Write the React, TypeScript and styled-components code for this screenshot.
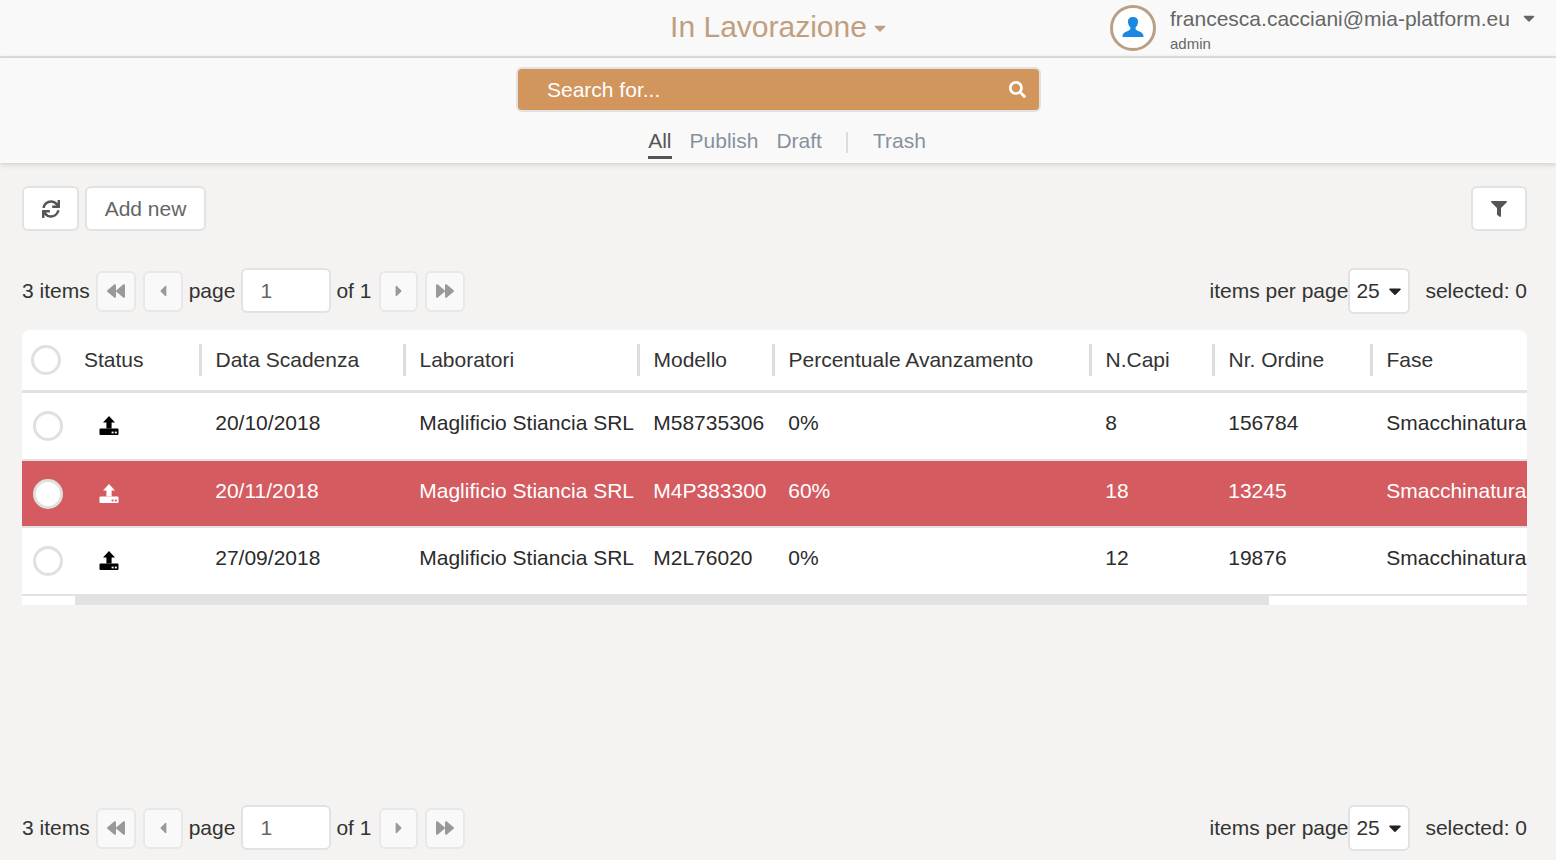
import React from "react";
import styled, { createGlobalStyle } from "styled-components";
import { FaBackward, FaCaretDown, FaCaretLeft, FaCaretRight, FaFilter, FaForward, FaSearch, FaSync } from "react-icons/fa";

const GlobalStyle = createGlobalStyle`
  * { box-sizing: border-box; }
  html, body { margin: 0; padding: 0; height: 100%; }
  body {
    background: #f4f3f1;
    font-family: "Liberation Sans", Arial, sans-serif;
    color: #212121;
    overflow: hidden;
  }
`;

// widths of the table columns, the first one holds the checkbox and the status
const COLUMNS = "177px 204px 234px 135px 317px 123px 158px 157px";

const headers = ["Data Scadenza", "Laboratori", "Modello", "Percentuale Avanzamento", "N.Capi", "Nr. Ordine", "Fase"];

const rows = [
  { date: "20/10/2018", lab: "Maglificio Stiancia SRL", model: "M58735306", perc: "0%", capi: "8", order: "156784", phase: "Smacchinatura", late: false },
  { date: "20/11/2018", lab: "Maglificio Stiancia SRL", model: "M4P383300", perc: "60%", capi: "18", order: "13245", phase: "Smacchinatura", late: true },
  { date: "27/09/2018", lab: "Maglificio Stiancia SRL", model: "M2L76020", perc: "0%", capi: "12", order: "19876", phase: "Smacchinatura", late: false },
];

const UploadIcon = ({ dots }: { dots: string }) => (
  <svg width="20" height="20" viewBox="0 0 20 20" fill="currentColor">
    <path d="M10 0 L16 6.6 H12.6 V12.5 H7.4 V6.6 H4 Z" />
    <rect x="0.5" y="12.5" width="19" height="6.5" rx="1" />
    <rect x="12.6" y="15.6" width="2" height="1.8" fill={dots} />
    <rect x="15.8" y="15.6" width="2" height="1.8" fill={dots} />
  </svg>
);

const Pager = () => (
  <PagerRow>
    <PagerSide>
      <PagerText>3 items</PagerText>
      <PageButton $width={40}><FaBackward size={18} /></PageButton>
      <PageButton $width={40}><FaCaretLeft size={18} /></PageButton>
      <PagerText>page</PagerText>
      <PageInput>1</PageInput>
      <OfText>of 1</OfText>
      <PageButton $width={38.5}><FaCaretRight size={18} /></PageButton>
      <PageButton $width={40}><FaForward size={18} /></PageButton>
    </PagerSide>
    <PagerSide>
      <PagerText>items per page</PagerText>
      <PerPage>25 <FaCaretDown size={20} /></PerPage>
      <Selected>selected: 0</Selected>
    </PagerSide>
  </PagerRow>
);

const App: React.FC = () => {
  return (
    <Page>
      <GlobalStyle />
      <TopBar>
        <Title>
          In Lavorazione
          <FaCaretDown size={18} />
        </Title>
        <User>
          <Avatar>
            <svg width="24" height="24" viewBox="0 0 24 24" fill="#1a88e0">
              <path d="M12 2 C8 2 6.6 4.6 7 7.6 C7.3 9.8 8.2 11.4 9.4 12.6 C9.7 14.2 9.2 15 7.4 15.8 C5 16.9 2.4 17.6 1.6 20 V22 H22.4 V20 C21.6 17.6 19 16.9 16.6 15.8 C14.8 15 14.3 14.2 14.6 12.6 C15.8 11.4 16.7 9.8 17 7.6 C17.4 4.6 16 2 12 2 Z" />
            </svg>
          </Avatar>
          <UserText>
            <Email>francesca.cacciani@mia-platform.eu</Email>
            <Role>admin</Role>
          </UserText>
          <UserCaret><FaCaretDown size={18} /></UserCaret>
        </User>
      </TopBar>

      <SearchPanel>
        <SearchBox>
          <span>Search for...</span>
          <FaSearch size={17} />
        </SearchBox>
        <Tabs>
          <Tab $active>All</Tab>
          <Tab>Publish</Tab>
          <Tab>Draft</Tab>
          <TabDivider />
          <Tab>Trash</Tab>
        </Tabs>
      </SearchPanel>

      <Content>
        <Toolbar>
          <ToolGroup>
            <ToolButton $width={57}><FaSync size={18} /></ToolButton>
            <ToolButton $width={121}>Add new</ToolButton>
          </ToolGroup>
          <ToolButton $width={56}><FaFilter size={16} /></ToolButton>
        </Toolbar>

        <Pager />

        <Table>
          <HeaderRow>
            <StatusHead>
              <HeadCheck />
              Status
            </StatusHead>
            {headers.map((h) => (
              <HeadCell key={h}>{h}</HeadCell>
            ))}
          </HeaderRow>
          {rows.map((r) => (
            <Row key={r.model} $late={r.late}>
              <StatusCell>
                <RowCheck />
                <IconWrap $late={r.late}><UploadIcon dots={r.late ? "#d45c60" : "#fff"} /></IconWrap>
              </StatusCell>
              <Cell>{r.date}</Cell>
              <Cell>{r.lab}</Cell>
              <Cell>{r.model}</Cell>
              <Cell>{r.perc}</Cell>
              <Cell>{r.capi}</Cell>
              <Cell>{r.order}</Cell>
              <Cell>{r.phase}</Cell>
            </Row>
          ))}
          <ScrollTrack>
            <ScrollThumb />
          </ScrollTrack>
        </Table>

        <BottomPager>
          <Pager />
        </BottomPager>
      </Content>
    </Page>
  );
};

const Page = styled.div`
  height: 860px;
  display: flex;
  flex-direction: column;
`;
const TopBar = styled.header`
  height: 58px;
  flex: none;
  background: #f9f9f9;
  border-bottom: 2px solid #e2e2e2;
  display: flex;
  justify-content: center;
  position: relative;
`;
const Title = styled.div`
  margin: 8px 0 0 3px;
  display: flex;
  align-items: center;
  gap: 4px;
  height: 37px;
  font-size: 30px;
  color: #c09f7f;
  svg {
    margin-top: 2px;
  }
`;
const User = styled.div`
  position: absolute;
  top: 5px;
  left: 1110px;
  display: flex;
`;
const Avatar = styled.div`
  width: 46px;
  height: 46px;
  border: 3px solid #bb9f85;
  border-radius: 50%;
  background: #fff;
  display: flex;
  align-items: center;
  justify-content: center;
  svg {
    margin-bottom: 2px;
  }
`;
const UserText = styled.div`
  margin-left: 14px;
`;
const Email = styled.div`
  font-size: 21px;
  line-height: 28px;
  color: #666;
`;
const Role = styled.div`
  font-size: 15px;
  line-height: 20px;
  margin-top: 1px;
  color: #666;
`;
const UserCaret = styled.div`
  margin: 4px 0 0 10px;
  color: #666;
`;
const SearchPanel = styled.section`
  height: 105px;
  flex: none;
  background: #f9f9f9;
  box-shadow: 0 1px 6px rgba(0, 0, 0, 0.18);
  display: flex;
  flex-direction: column;
  align-items: center;
  position: relative;
  padding-top: 9px;
`;
const SearchBox = styled.div`
  width: 525px;
  height: 45px;
  background: #d2955b;
  border: 2px solid #e2e2e2;
  border-radius: 6px;
  color: #fff;
  font-size: 21px;
  padding: 0 13px 0 29.5px;
  display: flex;
  align-items: center;
  justify-content: space-between;
`;
const Tabs = styled.nav`
  display: flex;
  align-items: flex-start;
  margin-top: 16px;
  margin-left: 36px;
`;
const Tab = styled.div<{ $active?: boolean }>`
  font-size: 21px;
  height: 31px;
  line-height: 26px;
  margin-right: 18px;
  color: ${(p) => (p.$active ? "#555" : "#87919e")};
  border-bottom: ${(p) => (p.$active ? "3px solid #555" : "none")};
`;
const TabDivider = styled.div`
  width: 2px;
  height: 21px;
  margin: 4px 25px 0 6px;
  background: #ddd;
`;
const Content = styled.main`
  flex: 1;
  padding: 23px 29px 9px 22px;
  display: flex;
  flex-direction: column;
  min-height: 0;
`;
const Toolbar = styled.div`
  display: flex;
  justify-content: space-between;
  margin-bottom: 37px;
`;
const ToolGroup = styled.div`
  display: flex;
  gap: 6px;
`;
const ToolButton = styled.div<{ $width: number }>`
  width: ${(p) => p.$width}px;
  height: 45px;
  background: #fff;
  border: 2px solid #e2e2e2;
  border-radius: 6px;
  color: #666;
  font-size: 21px;
  display: flex;
  align-items: center;
  justify-content: center;
  svg {
    color: #555;
  }
`;
const PagerRow = styled.div`
  display: flex;
  justify-content: space-between;
  align-items: center;
  height: 46px;
`;
const PagerSide = styled.div`
  display: flex;
  align-items: center;
`;
const PagerText = styled.span`
  font-size: 21px;
  color: #333;
`;
const OfText = styled(PagerText)`
  margin-right: 2px;
`;
const PageButton = styled.div<{ $width: number }>`
  width: ${(p) => p.$width}px;
  height: 41px;
  margin: 0 6px;
  background: #f9f9f9;
  border: 2px solid #e8e8e8;
  border-radius: 6px;
  color: #999;
  display: flex;
  align-items: center;
  justify-content: center;
  & + & {
    margin-left: 1px;
  }
`;
const PageInput = styled.div`
  width: 90px;
  height: 45px;
  margin: -1px 5px 0 6px;
  padding-left: 17px;
  background: #fff;
  border: 2px solid #e2e2e2;
  border-radius: 6px;
  color: #666;
  font-size: 21px;
  line-height: 41px;
`;
const PerPage = styled.div`
  width: 62px;
  height: 46px;
  padding-left: 6px;
  background: #fff;
  border: 2px solid #e2e2e2;
  border-radius: 6px;
  color: #333;
  font-size: 21px;
  display: flex;
  align-items: center;
  gap: 5px;
  svg {
    flex: none;
    color: #222;
  }
`;
const Selected = styled.span`
  font-size: 21px;
  color: #333;
  margin-left: 15px;
`;
const Table = styled.div`
  margin-top: 16px;
  background: #fff;
  border-radius: 8px 8px 0 0;
  overflow: hidden;
`;
const HeaderRow = styled.div`
  display: grid;
  grid-template-columns: ${COLUMNS};
  height: 63px;
  padding-bottom: 1px;
  border-bottom: 3px solid #e2e2e2;
  align-items: center;
`;
const HeadCell = styled.div`
  height: 32px;
  padding-left: 13.5px;
  margin-top: 1px;
  border-left: 3px solid #ddd;
  font-size: 21px;
  line-height: 32px;
  color: #333;
`;
const StatusHead = styled.div`
  display: flex;
  align-items: center;
  padding-left: 9px;
  font-size: 21px;
  color: #333;
`;
const HeadCheck = styled.div`
  width: 30px;
  height: 30px;
  margin-right: 23px;
  border: 3px solid #e0e0e0;
  border-radius: 50%;
  background: #fff;
`;
const Row = styled.div<{ $late: boolean }>`
  display: grid;
  grid-template-columns: ${COLUMNS};
  height: 67.5px;
  border-bottom: 2.5px solid #e2e2e2;
  background: ${(p) => (p.$late ? "#d45c60" : "#fff")};
  color: ${(p) => (p.$late ? "#fff" : "#2b2b2b")};
`;
const Cell = styled.div`
  padding: 16px 0 0 16.25px;
  font-size: 21px;
  line-height: 28px;
  white-space: nowrap;
  overflow: hidden;
`;
const StatusCell = styled.div`
  display: flex;
  align-items: center;
  padding: 0 0 0 11px;
  margin-top: 1px;
`;
const RowCheck = styled.div`
  width: 30px;
  height: 30px;
  border: 3px solid #e0e0e0;
  border-radius: 50%;
  background: #fff;
`;
const IconWrap = styled.div<{ $late: boolean }>`
  margin-left: 35.5px;
  display: flex;
  color: ${(p) => (p.$late ? "#fff" : "#000")};
`;
const ScrollTrack = styled.div`
  height: 9px;
  padding-left: 53px;
`;
const ScrollThumb = styled.div`
  width: 1194px;
  height: 100%;
  background: #e2e2e2;
`;
const BottomPager = styled.div`
  margin-top: auto;
`;

export default App;
